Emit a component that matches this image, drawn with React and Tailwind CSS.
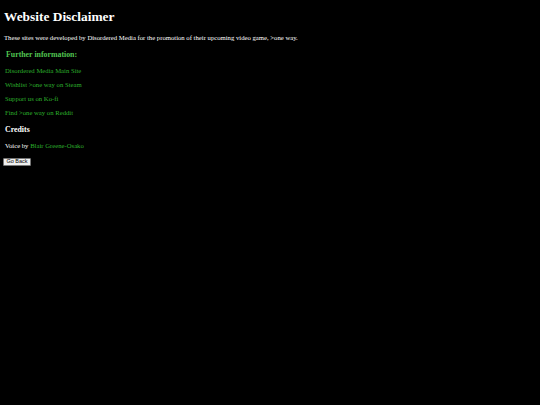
export default function App() {
    const links = [
        'Disordered Media Main Site',
        'Wishlist >one way on Steam',
        'Support us on Ko-fi',
        'Find >one way on Reddit',
    ]

    return (
        <div className="min-h-[405px] w-[540px] bg-black text-white font-['Liberation_Serif',serif] leading-[normal] pl-[3px] pt-[8.6px]">
            <h1 className="text-[13.4px] font-bold ml-px">Website Disclaimer</h1>
            <p className="text-[6.7px] mt-[9.4px] ml-px">
                These sites were developed by Disordered Media for the promotion of their upcoming video game, &gt;one way.
            </p>

            {/* Further information */}
            <div className="pl-[2px]">
                <h3 className="text-[7.85px] font-bold text-[#50c450] mt-[9.3px] ml-px">Further information:</h3>
                <div className="flex flex-col gap-[7px] mt-[7.3px]">
                    {links.map((l) => (
                        <a key={l} className="text-[6.7px] text-[#2cb02c]">{l}</a>
                    ))}
                </div>

                <h3 className="text-[7.85px] font-bold mt-[9.1px]">Credits</h3>
                <p className="text-[6.7px] mt-[8px]">
                    Voice by <a className="text-[#2cb02c]">Blair Greene-Osako</a>
                </p>
            </div>

            <button className="mt-[9.3px] h-[8.5px] w-[28px] flex items-center justify-center bg-[#efefef] border border-[#767676] rounded-[1px] text-black text-[5.5px] font-['Liberation_Sans',sans-serif] leading-none">
                Go Back
            </button>
        </div>
    )
}
